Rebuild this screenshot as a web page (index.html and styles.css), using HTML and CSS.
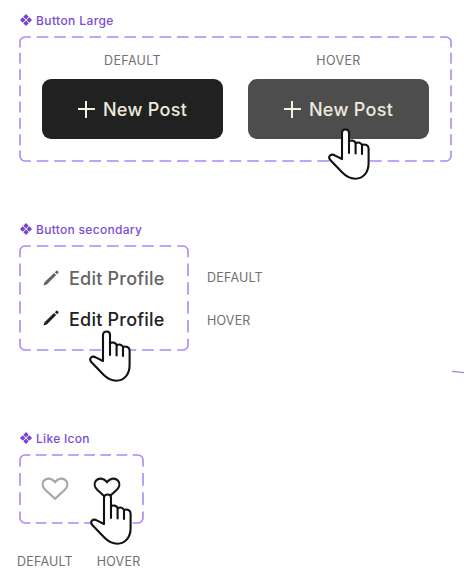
FILE: index.html
```html
<!DOCTYPE html>
<html lang="en">
<head>
<meta charset="utf-8">
<title>Components</title>
<link rel="stylesheet" href="styles.css">
</head>
<body>
<svg class="defs" width="0" height="0" aria-hidden="true">
  <symbol id="component" viewBox="0 0 12 12"><path d="M6 0 8.7 2.7 6 5.4 3.3 2.7ZM2.7 3.3 5.4 6 2.7 8.7 0 6ZM9.3 3.3 12 6 9.3 8.7 6.6 6ZM6 6.6 8.7 9.3 6 12 3.3 9.3Z"/></symbol>
  <symbol id="pencil" viewBox="0 0 16 16"><path d="M.4 15.6 1.5 12.3 11 3 13.2 5.1 3.8 14.4ZM11.8 2.2 13.2.9Q14 .3 14.7.9L15.3 1.5Q15.9 2.2 15.3 2.9L14 4.3Z"/></symbol>
  <symbol id="heart" viewBox="0 0 28 24"><path d="M14 21.8 4.2 12.8C1.2 9.8.9 6 3.1 3.5 6 .5 10.8 1 14 5 17.2 1 22 .5 24.9 3.5 27.1 6 26.8 9.8 23.8 12.8Z"/></symbol>
  <symbol id="hand" viewBox="0 0 42 52"><path class="hand-shape" d="M14 31V4.8C14 .4 21 .4 21 4.8V13.5C22.5 11.8 27 12.2 27.8 15.3 30 13.6 33.3 14.7 34 17 37 15.6 40.6 17.2 40.6 20.5V35C40.6 44.5 35 50.7 27.5 50.7 21.5 50.7 18 48.3 14.3 44.5L2.5 32.2C-.7 28.5 3 25 7.2 27.6Z"/><path class="hand-shape" d="M21 12V25M27.6 15V25.5M34 17.5V26"/></symbol>
</svg>
<main class="sheet">
  <section class="group large">
    <h2 class="title"><svg class="mark"><use href="#component"/></svg>Button Large</h2>
    <div class="frame">
      <svg class="outline">
        <path d="M1 6A5 5 0 0 1 6 1M427 1A5 5 0 0 1 432 6M432 120A5 5 0 0 1 427 125M6 125A5 5 0 0 1 1 120"/>
        <path class="dash" pathLength="72" d="M6 1H427"/><path class="dash" pathLength="72" d="M6 125H427"/>
        <path class="dash" pathLength="21" d="M1 6V120"/><path class="dash" pathLength="21" d="M432 6V120"/>
      </svg>
      <div class="variant"><span class="state">DEFAULT</span><button class="primary"><i class="plus"></i><span>New Post</span></button></div>
      <div class="variant"><span class="state">HOVER</span><button class="primary hovered"><i class="plus"></i><span>New Post</span></button></div>
      <svg class="hand"><use href="#hand"/></svg>
    </div>
  </section>
  <section class="group secondary">
    <h2 class="title"><svg class="mark"><use href="#component"/></svg>Button secondary</h2>
    <div class="row">
      <div class="frame">
        <svg class="outline">
          <path d="M1 6A5 5 0 0 1 6 1M164 1A5 5 0 0 1 169 6M169 100A5 5 0 0 1 164 105M6 105A5 5 0 0 1 1 100"/>
          <path class="dash" pathLength="27" d="M6 1H164"/><path class="dash" pathLength="27" d="M6 105H164"/>
          <path class="dash" pathLength="15" d="M1 6V100"/><path class="dash" pathLength="15" d="M169 6V100"/>
        </svg>
        <button class="edit"><svg class="pencil"><use href="#pencil"/></svg><span class="label">Edit Profile</span></button>
        <button class="edit hovered"><svg class="pencil"><use href="#pencil"/></svg><span class="label">Edit Profile</span></button>
        <svg class="hand"><use href="#hand"/></svg>
      </div>
      <div class="states"><span class="state">DEFAULT</span><span class="state">HOVER</span></div>
    </div>
  </section>
  <section class="group like">
    <h2 class="title"><svg class="mark"><use href="#component"/></svg>Like Icon</h2>
    <div class="frame">
      <svg class="outline">
        <path d="M1 6A5 5 0 0 1 6 1M119 1A5 5 0 0 1 124 6M124 64A5 5 0 0 1 119 69M6 69A5 5 0 0 1 1 64"/>
        <path class="dash" pathLength="21" d="M6 1H119"/><path class="dash" pathLength="21" d="M6 69H119"/>
        <path class="dash" pathLength="9" d="M1 6V64"/><path class="dash" pathLength="9" d="M124 6V64"/>
      </svg>
      <svg class="heart"><use href="#heart"/></svg>
      <svg class="heart hovered"><use href="#heart"/></svg>
      <svg class="hand"><use href="#hand"/></svg>
    </div>
    <div class="states"><span class="state">DEFAULT</span><span class="state">HOVER</span></div>
  </section>
  <svg class="stray" viewBox="0 0 12 4"><path d="M0 1.3 12 2.7"/></svg>
</main>
</body>
</html>
```

FILE: styles.css
```css
* { box-sizing: border-box; }
body { margin: 0; background: #fff; font-family: Inter, "Liberation Sans", sans-serif; }
.defs { position: absolute; }
.sheet { position: relative; width: 464px; height: 574px; padding: 12px 0 0 19px; overflow: hidden; }
.group { height: 209px; }
.title { display: flex; align-items: center; gap: 4px; height: 16px; margin: 0 0 8px 1px; color: #7a4cd6; font-size: 12px; font-weight: 500; letter-spacing: .3px; }
.large .title { letter-spacing: .4px; }
.mark { width: 12px; height: 12px; fill: #7444d0; }
.frame { position: relative; display: flex; }
.outline { position: absolute; inset: 0; width: 100%; height: 100%; fill: none; stroke: #ad87f7; stroke-width: 1.6; }
.dash { stroke-dasharray: 2 1; stroke-dashoffset: 1; }
.state { color: #707070; font-size: 12.5px; line-height: 18px; letter-spacing: .2px; white-space: nowrap; }
button { margin: 0; padding: 0; border: 0; background: none; font-family: inherit; font-weight: 500; }
.large .frame { width: 433px; height: 126px; padding: 16px 23px 0; gap: 25px; }
.large .state { letter-spacing: .35px; }
.variant { display: flex; flex-direction: column; align-items: center; gap: 9px; width: 181px; }
.primary { display: flex; align-items: center; justify-content: center; gap: 8px; width: 181px; height: 60px; border-radius: 9px; background: #212121; color: #eeebdc; font-size: 18px; letter-spacing: .3px; }
.primary.hovered { background: #4d4d4d; }
.plus { width: 17px; height: 17px; background: linear-gradient(#f4f1de, #f4f1de) center / 17px 2px no-repeat, linear-gradient(#f4f1de, #f4f1de) center / 2px 17px no-repeat; }
.hand { position: absolute; width: 42px; height: 52px; }
.hand-shape { fill: #fff; stroke: #111; stroke-width: 2.1; stroke-linejoin: round; stroke-linecap: round; }
.large .hand { left: 309px; top: 92px; }
.row { display: flex; }
.secondary .frame { flex-direction: column; width: 170px; height: 106px; padding: 18px 24px; gap: 11px; }
.edit { display: flex; align-items: center; gap: 10px; height: 30px; color: #646464; font-size: 18px; letter-spacing: .22px; white-space: nowrap; }
.edit.hovered { color: #222; }
.label { padding-top: 2px; }
.pencil { width: 16px; height: 16px; fill: currentColor; }
.secondary .hand { left: 70px; top: 85px; }
.secondary .states { display: flex; flex-direction: column; gap: 25px; padding: 24px 0 0 18px; }
.like .frame { width: 125px; height: 70px; padding: 23px 22px; gap: 24px; }
.heart { width: 28px; height: 24px; fill: none; stroke: #a6a6a6; stroke-width: 2.2; }
.heart.hovered { stroke: #161616; }
.like .hand { left: 71px; top: 39px; }
.like .states { display: flex; gap: 24px; margin: 29px 0 0 -2px; }
.stray { position: absolute; left: 452px; top: 370px; width: 12px; height: 4px; fill: none; stroke: #9b80e8; stroke-width: 1.3; }
```
